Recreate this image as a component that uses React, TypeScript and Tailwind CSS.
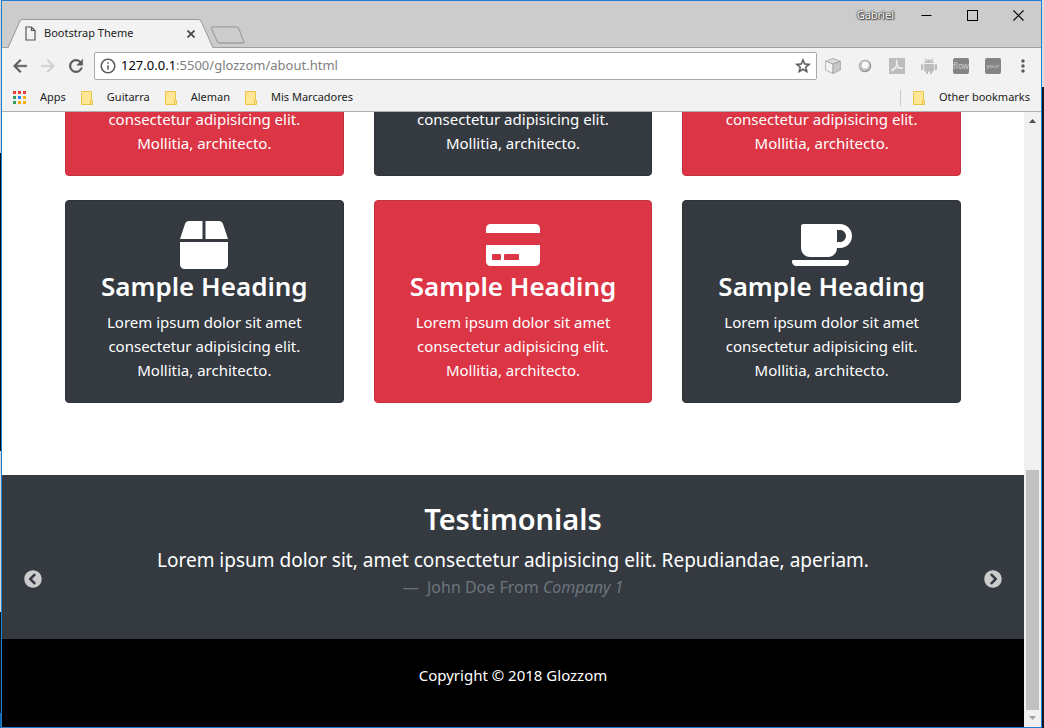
import type { ReactNode } from "react";
import { FaBox, FaChevronCircleLeft, FaChevronCircleRight, FaCoffee, FaCreditCard } from "react-icons/fa";
import { MdInfoOutline, MdMoreVert } from "react-icons/md";

type Tone = "dark" | "red";

const toneClass: Record<Tone, string> = {
  dark: "border-[#2e3338] bg-[#343a40]",
  red: "border-[#c5303e] bg-[#dc3545]",
};

const services: { tone: Tone; icon: ReactNode }[] = [
  { tone: "red", icon: <FaBox size={48} /> },
  { tone: "dark", icon: <FaCreditCard className="h-12 w-[54px]" /> },
  { tone: "red", icon: <FaCoffee className="h-12 w-[60px]" /> },
  { tone: "dark", icon: <FaBox size={48} /> },
  { tone: "red", icon: <FaCreditCard className="h-12 w-[54px]" /> },
  { tone: "dark", icon: <FaCoffee className="h-12 w-[60px]" /> },
];

const glyphs = {
  back: "M20 11H7.83l5.59-5.59L12 4l-8 8 8 8 1.41-1.41L7.83 13H20v-2z",
  forward: "M12 4l-1.41 1.41L16.17 11H4v2h12.17l-5.58 5.59L12 20l8-8z",
  reload:
    "M17.65 6.35A7.958 7.958 0 0012 4c-4.42 0-7.99 3.58-7.99 8s3.57 8 7.99 8c3.73 0 6.84-2.55 7.73-6h-2.08A5.99 5.99 0 0112 18c-3.31 0-6-2.69-6-6s2.69-6 6-6c1.66 0 3.14.69 4.22 1.78L13 11h7V4l-2.35 2.35z",
  star: "M22 9.24l-7.19-.62L12 2 9.19 8.63 2 9.24l5.46 4.73L5.82 21 12 17.27 18.18 21l-1.63-7.03L22 9.24zM12 15.4l-3.76 2.27 1-4.28-3.32-2.88 4.38-.38L12 6.1l1.71 4.04 4.38.38-3.32 2.88 1 4.28L12 15.4z",
};

function Glyph({ name, className }: { name: keyof typeof glyphs; className: string }) {
  return (
    <svg className={className} viewBox="0 0 24 24" fill="currentColor" stroke="currentColor" strokeWidth=".6" aria-hidden="true">
      <path d={glyphs[name]} />
    </svg>
  );
}

function ServiceCard({ tone, icon }: { tone: Tone; icon: ReactNode }) {
  return (
    <article className={`flex flex-col items-center rounded border p-5 text-center text-white ${toneClass[tone]}`}>
      {icon}
      <h3 className="mb-1.5 text-[26px] leading-[35px] font-semibold whitespace-nowrap">Sample Heading</h3>
      <p className="max-w-[220px] text-[15px] leading-6">
        Lorem ipsum dolor sit amet consectetur adipisicing elit. Mollitia, architecto.
      </p>
    </article>
  );
}

function TitleBar() {
  return (
    <header className="flex h-[47px] shrink-0 items-start justify-between bg-[#cccccc] shadow-[inset_0_-1px_0_#a0a0a0]">
      <div className="flex h-full items-end pl-1.5">
        <div className="relative h-[29px] w-[205px]">
          <svg className="absolute inset-0 size-full" viewBox="0 0 205 29" aria-hidden="true">
            <path d="M0 29 L1 28 L12 2 Q13 .5 15 .5 H190 Q192 .5 193 2 L204 28 L205 29 Z" fill="#f2f2f2" />
            <path d="M0 28.5 L12 2 Q13 .5 15 .5 H190 Q192 .5 193 2 L205 28.5" fill="none" stroke="#999" />
          </svg>
          <div className="relative flex h-full items-center pr-[14px] pl-[17px] text-[11px] text-[#222]">
            <svg className="mr-2 h-[15px] w-[11px]" viewBox="0 0 11 15" fill="none" stroke="#555" strokeWidth="1.2" aria-hidden="true">
              <path d="M1 1 H6.5 L10 4.5 V14 H1 Z M6.5 1 V4.5 H10" />
            </svg>
            <span className="grow whitespace-nowrap">Bootstrap Theme</span>
            <button aria-label="Close tab" className="p-1">
              <svg className="size-2" viewBox="0 0 8 8" stroke="#444" strokeWidth="1.7" aria-hidden="true">
                <path d="M.5 .5 L7.5 7.5 M7.5 .5 L.5 7.5" />
              </svg>
            </button>
          </div>
        </div>
        <button aria-label="New tab" className="-ml-1 mb-1">
          <svg className="h-[18px] w-[36px]" viewBox="0 0 36 18" aria-hidden="true">
            <path d="M2.7 3 Q2 .8 4 .8 H27 Q29 .8 30 3 L34.5 15 Q35.5 17 33.5 17 H11 Q9 17 8 15 Z" fill="#cdcdcd" stroke="#a0a0a0" strokeWidth="1.3" />
          </svg>
        </button>
      </div>
      <div className="flex h-[29px] items-center">
        <span className="mr-[9px] text-[11px] text-white [text-shadow:0_0_1px_#444,0_0_2px_#444,0_0_2px_#444,1px_1px_1px_#555]">
          Gabriel
        </span>
        <button aria-label="Minimize" className="flex h-full w-[46px] items-center justify-center">
          <svg className="size-[11px]" viewBox="0 0 11 11" stroke="#000" aria-hidden="true">
            <path d="M.5 5.5 H10.5" />
          </svg>
        </button>
        <button aria-label="Maximize" className="flex h-full w-[46px] items-center justify-center">
          <svg className="size-[11px]" viewBox="0 0 11 11" fill="none" stroke="#000" shapeRendering="crispEdges" aria-hidden="true">
            <path d="M.5 .5 H10.5 V10.5 H.5 Z" />
          </svg>
        </button>
        <button aria-label="Close" className="flex h-full w-[46px] items-center justify-center">
          <svg className="size-[11px]" viewBox="0 0 11 11" stroke="#000" strokeWidth="1.1" aria-hidden="true">
            <path d="M.5 .5 L10.5 10.5 M10.5 .5 L.5 10.5" />
          </svg>
        </button>
      </div>
    </header>
  );
}

function Extensions() {
  return (
    <div className="flex items-center gap-4">
      <button aria-label="Cube">
        <svg className="size-4" viewBox="0 0 16 16" stroke="#9a9a9a" strokeWidth=".7" strokeLinejoin="round" aria-hidden="true">
          <path d="M8 .5 L15.4 3.3 L8 6 L.6 3.3 Z" fill="#dcdcdc" />
          <path d="M.6 3.3 L8 6 V15.5 L.6 12 Z" fill="#f4f4f4" />
          <path d="M15.4 3.3 L8 6 V15.5 L15.4 12 Z" fill="#c8c8c8" />
        </svg>
      </button>
      <button aria-label="Ring">
        <svg className="size-4" viewBox="0 0 16 16" aria-hidden="true">
          <circle cx="8" cy="8" r="6.2" fill="#929292" />
          <circle cx="7.6" cy="7.4" r="5.5" fill="#c2c2c2" />
          <circle cx="8.2" cy="7.2" r="3.4" fill="#fafafa" />
        </svg>
      </button>
      <button aria-label="PDF">
        <svg className="size-4" viewBox="0 0 16 16" aria-hidden="true">
          <path d="M0 0 H16 V16 H0 Z" fill="#bdbdbd" />
          <path d="M7.5 2.5 Q9 5 6.5 9 Q5 12 3 13 Q2.5 11 7 10 Q11 9 13.5 10 Q13 11.5 10.5 10 Q7 7 7.5 2.5 Z" fill="none" stroke="#f2f2f2" strokeWidth="1.1" />
        </svg>
      </button>
      <button aria-label="Android">
        <svg className="size-4" viewBox="0 0 16 16" fill="#bcbcbc" aria-hidden="true">
          <path d="M3.2 5 Q3.5 1.7 8 1.5 Q12.5 1.7 12.8 5 Z" />
          <path d="M4 .3 L5.5 2.5 M12 .3 L10.5 2.5" stroke="#bcbcbc" />
          <path d="M3.2 6 H12.8 V13.5 H11 V16 H9 V13.5 H7 V16 H5 V13.5 H3.2 Z" />
          <path d="M0 6.2 H2.3 V12 H0 Z M13.7 6.2 H16 V12 H13.7 Z" />
          <circle cx="6" cy="3.6" r=".6" fill="#f2f2f2" />
          <circle cx="10" cy="3.6" r=".6" fill="#f2f2f2" />
        </svg>
      </button>
      <button className="flex size-4 items-center justify-center rounded-[2px] bg-[#848484] text-[8px] leading-4 text-[#d0d0d0]">
        flow
      </button>
      <button className="flex size-4 items-center justify-center rounded-[2px] bg-[#848484] text-[6px] leading-[14px] text-[#d0d0d0]">
        your
      </button>
    </div>
  );
}

function Toolbar() {
  return (
    <div className="flex h-9 shrink-0 items-center bg-[#f2f2f2] px-2 text-[#5a5a5a]">
      <div className="flex items-center gap-2">
        <button aria-label="Back"><Glyph name="back" className="size-5" /></button>
        <button aria-label="Forward" className="text-[#d0d0d0]"><Glyph name="forward" className="size-5" /></button>
        <button aria-label="Reload"><Glyph name="reload" className="size-5" /></button>
      </div>
      <div className="ml-2 flex h-7 grow items-center rounded-[2px] border border-[#a9a9a9] bg-white px-1">
        <MdInfoOutline size={18} />
        <a href="http://127.0.0.1:5500/glozzom/about.html" className="ml-1 grow text-[13px] whitespace-nowrap text-[#808080]">
          <span className="text-black">127.0.0.1</span>:5500/glozzom/about.html
        </a>
        <button aria-label="Bookmark this page"><Glyph name="star" className="size-[18px]" /></button>
      </div>
      <div className="mr-3 ml-2"><Extensions /></div>
      <button aria-label="Menu"><MdMoreVert size={20} /></button>
    </div>
  );
}

function Bookmark({ label, className = "" }: { label: string; className?: string }) {
  return (
    <a href="#" className={`flex items-center whitespace-nowrap ${className}`}>
      <svg className="mr-[14px] h-[14px] w-3" viewBox="0 0 12 14" fill="#ffe694" stroke="#e8c547" aria-hidden="true">
        <path d="M.5 .5 H10.5 V13.5 H.5 Z" />
        <path d="M9.5 9.5 H11.5 V13.5 H9.5 Z" />
      </svg>
      {label}
    </a>
  );
}

function BookmarkBar() {
  return (
    <nav className="flex h-7 shrink-0 items-center border-b border-[#b0b0b0] bg-[#f2f2f2] px-[11px] text-[11px] text-[#222]">
      <a href="#" className="flex items-center">
        <svg className="mr-[14px] size-[13px]" viewBox="0 0 13 13" aria-hidden="true">
          <path d="M0 0 H3 V3 H0 Z M5 0 H8 V3 H5 Z M10 0 H13 V3 H10 Z" fill="#f03c32" />
          <path d="M0 5 H3 V8 H0 Z M0 10 H3 V13 H0 Z" fill="#2fa05a" />
          <path d="M5 5 H8 V8 H5 Z" fill="#1e88f0" />
          <path d="M10 5 H13 V8 H10 Z M5 10 H8 V13 H5 Z M10 10 H13 V13 H10 Z" fill="#fbae08" />
        </svg>
        Apps
      </a>
      <Bookmark label="Guitarra" className="ml-[15px]" />
      <Bookmark label="Aleman" className="ml-[15px]" />
      <Bookmark label="Mis Marcadores" className="ml-[15px]" />
      <div className="ml-auto h-4 w-px bg-[#c8c8c8]" />
      <Bookmark label="Other bookmarks" className="ml-3" />
    </nav>
  );
}

function Page() {
  return (
    <main className="flex min-w-0 grow flex-col justify-end overflow-hidden bg-white">
      <section className="grid shrink-0 grid-cols-3 gap-x-[30px] gap-y-6 px-[63px] pb-[72px]">
        {services.map((service, index) => (
          <ServiceCard key={index} {...service} />
        ))}
      </section>
      <section className="relative shrink-0 bg-[#343a40] px-16 pt-6 pb-10 text-center text-white">
        <h2 className="mb-1.5 text-[29px] leading-[40px] font-semibold">Testimonials</h2>
        <blockquote>
          <p className="text-[19px] leading-[30px]">
            Lorem ipsum dolor sit, amet consectetur adipisicing elit. Repudiandae, aperiam.
          </p>
          <footer className="text-[16px] leading-6 text-[#6c757d]">
            —&nbsp; John Doe From <cite>Company 1</cite>
          </footer>
        </blockquote>
        <button aria-label="Previous testimonial" className="absolute top-[95px] left-[22px] text-[#cccccc]">
          <FaChevronCircleLeft size={18} />
        </button>
        <button aria-label="Next testimonial" className="absolute top-[95px] right-[22px] text-[#cccccc]">
          <FaChevronCircleRight size={18} />
        </button>
      </section>
      <footer className="shrink-0 bg-black pt-6 pb-10 text-center text-[15px] leading-6 text-white">
        Copyright © 2018 Glozzom
      </footer>
    </main>
  );
}

function ScrollBar() {
  return (
    <div className="flex w-[17px] shrink-0 flex-col items-center bg-[#f1f1f1]" aria-hidden="true">
      <svg className="size-[17px]" viewBox="0 0 17 17" fill="#505050">
        <path d="M5 11 L8.5 7 L12 11 Z" />
      </svg>
      <div className="grow-[341]" />
      <div className="w-[13px] grow-[240] bg-[#c1c1c1]" />
      <svg className="size-[17px]" viewBox="0 0 17 17" fill="#a3a3a3">
        <path d="M5 6 L8.5 10 L12 6 Z" />
      </svg>
    </div>
  );
}

export default function App() {
  return (
    <div className="flex h-screen font-['Noto_Sans','Open_Sans',sans-serif]">
      <div className="w-px shrink-0 bg-[linear-gradient(#cfd3d8_0_21%,#0c1118_21%_62%,#d5d5d5_62%_84%,#15191d_84%_98%,#0f62ac_98%)]" />
      <div className="flex min-w-0 grow flex-col border border-[#1e7fd0]">
        <TitleBar />
        <Toolbar />
        <BookmarkBar />
        <div className="flex min-h-0 grow">
          <Page />
          <ScrollBar />
        </div>
      </div>
      <div className="w-0.5 shrink-0 bg-[linear-gradient(#dddddd_0_12%,#151a22_12%)]" />
    </div>
  );
}
